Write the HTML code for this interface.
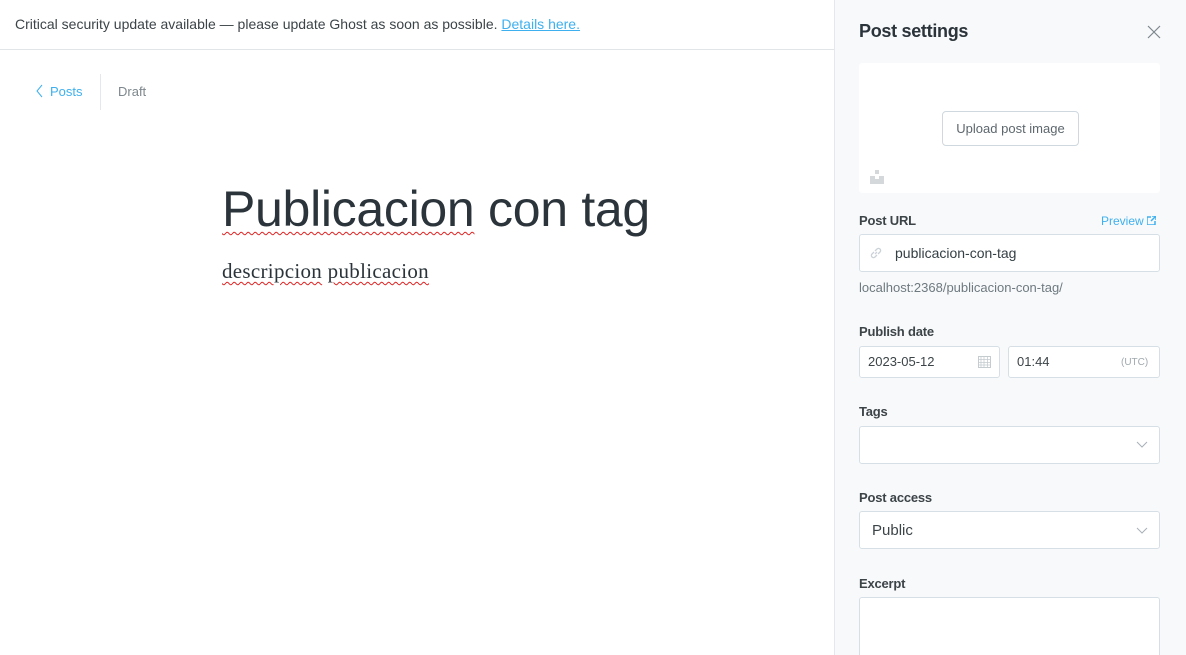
<!DOCTYPE html>
<html style="overflow:hidden;height:655px"><head><meta charset="utf-8"><style>
*{box-sizing:border-box;margin:0;padding:0}
body{width:1186px;height:655px;overflow:hidden;background:#fff;font-family:"Liberation Sans",sans-serif;color:#343f44;position:relative}
.a{position:absolute}
.banner{left:0;top:0;width:834px;height:50px;border-bottom:1px solid #e2e5e8;font-size:14px;color:#3c4448;padding:16px 0 0 15px}
.banner a{color:#3eb0ef;text-decoration:underline}
.side{left:834px;top:0;width:352px;height:655px;background:#f8f9fa;border-left:1px solid #e5e8ea}
.lbl{font-size:13px;color:#3c4448;font-weight:bold;letter-spacing:-.2px}
.inp{background:#fff;border:1px solid #d6dfe5;border-radius:3px}
.title{left:222px;top:180px;font-size:50px;color:#2b343a;letter-spacing:-.3px}
.sq{text-decoration:underline wavy #e02020;text-decoration-thickness:1px;text-underline-offset:5px}
</style></head><body>
<div class="a banner">Critical security update available — please update Ghost as soon as possible. <a>Details here.</a></div>
<div class="a" style="left:36px;top:84px;font-size:13px;color:#3eb0ef">
<svg width="8" height="14" style="vertical-align:-2px;margin-right:6px"><path d="M6 1 L1 7 L6 13" fill="none" stroke="#3eb0ef" stroke-width="1"/></svg>Posts</div>
<div class="a" style="left:100px;top:74px;width:1px;height:36px;background:#e5e8ea"></div>
<div class="a" style="left:118px;top:84px;font-size:13px;color:#7d878d">Draft</div>
<div class="a title"><span class="sq">Publicacion</span> con tag</div>
<div class="a" style="left:222px;top:259px;font-size:21px;letter-spacing:.3px;font-family:'Liberation Serif',serif;color:#2b343a"><span class="sq" style="text-underline-offset:3px">descripcion</span> <span class="sq" style="text-underline-offset:3px">publicacion</span></div>

<div class="a side"></div>
<div class="a" style="left:859px;top:21px;font-size:18px;color:#2b343a;font-weight:bold;letter-spacing:-.3px">Post settings</div>
<svg class="a" style="left:1147px;top:25px" width="14" height="14"><path d="M1 1L13 13M13 1L1 13" stroke="#7d878d" stroke-width="1.2"/></svg>
<div class="a" style="left:859px;top:63px;width:301px;height:130px;background:#fff;border-radius:3px"></div>
<div class="a" style="left:942px;top:111px;width:137px;height:35px;border:1px solid #cfd8de;border-radius:4px;background:#fff;font-size:13px;color:#5d676d;text-align:center;line-height:33px">Upload post image</div>
<div class="a" style="left:870px;top:170px;width:14px;height:14px">
<div class="a" style="left:5px;top:0;width:4px;height:4px;background:#d5d8da"></div>
<div class="a" style="left:0;top:6px;width:14px;height:8px;background:#d5d8da"></div>
<div class="a" style="left:5px;top:6px;width:4px;height:3px;background:#fff"></div></div>
<div class="a lbl" style="left:859px;top:213px">Post URL</div>
<div class="a" style="left:1101px;top:214px;font-size:12px;color:#3eb0ef">Preview <svg width="9" height="9" style="vertical-align:0"><path d="M0 1h4M0 1v8h8V5" fill="none" stroke="#3eb0ef" stroke-width="1.5"/><path d="M4 5L9 0M5 0h4v4" fill="none" stroke="#3eb0ef" stroke-width="1.5"/></svg></div>
<div class="a inp" style="left:859px;top:234px;width:301px;height:38px"></div>
<svg class="a" style="left:869px;top:246px" width="14" height="14"><path d="M6 8L8 6M5 6L3 8a2 2 0 0 0 3 3l2-2M9 8l2-2a2 2 0 0 0-3-3L6 5" fill="none" stroke="#ccd3d8" stroke-width="1.3"/></svg>
<div class="a" style="left:895px;top:245px;font-size:14px;color:#343f44">publicacion-con-tag</div>
<div class="a" style="left:859px;top:280px;font-size:13px;color:#6e7a80">localhost:2368/publicacion-con-tag/</div>
<div class="a lbl" style="left:859px;top:324px">Publish date</div>
<div class="a inp" style="left:859px;top:346px;width:141px;height:32px"></div>
<div class="a" style="left:868px;top:354px;font-size:13px;color:#3c4448">2023-05-12</div>
<svg class="a" style="left:978px;top:355px" width="13" height="13"><rect x="0.5" y="1.5" width="12" height="11" fill="none" stroke="#c5ccd0"/><path d="M0 4.5h13M3 1v11M6 1v11M9.5 1v11M0 7.5h13M0 10h13" stroke="#c5ccd0" stroke-width=".8"/></svg>
<div class="a inp" style="left:1008px;top:346px;width:152px;height:32px"></div>
<div class="a" style="left:1017px;top:354px;font-size:13px;color:#3c4448">01:44</div>
<div class="a" style="left:1121px;top:357px;font-size:10px;color:#a0a9ae">(UTC)</div>
<div class="a lbl" style="left:859px;top:404px">Tags</div>
<div class="a inp" style="left:859px;top:426px;width:301px;height:38px"></div>
<svg class="a" style="left:1136px;top:441px" width="12" height="8"><path d="M1 1L6 6L11 1" fill="none" stroke="#a8b2b8" stroke-width="1"/></svg>
<div class="a lbl" style="left:859px;top:490px">Post access</div>
<div class="a inp" style="left:859px;top:511px;width:301px;height:38px"></div>
<div class="a" style="left:872px;top:522px;font-size:15px;color:#3c4448">Public</div>
<svg class="a" style="left:1136px;top:527px" width="12" height="8"><path d="M1 1L6 6L11 1" fill="none" stroke="#a8b2b8" stroke-width="1"/></svg>
<div class="a lbl" style="left:859px;top:576px">Excerpt</div>
<div class="a inp" style="left:859px;top:597px;width:301px;height:58px;border-bottom:none;border-radius:3px 3px 0 0"></div>
</body></html>
